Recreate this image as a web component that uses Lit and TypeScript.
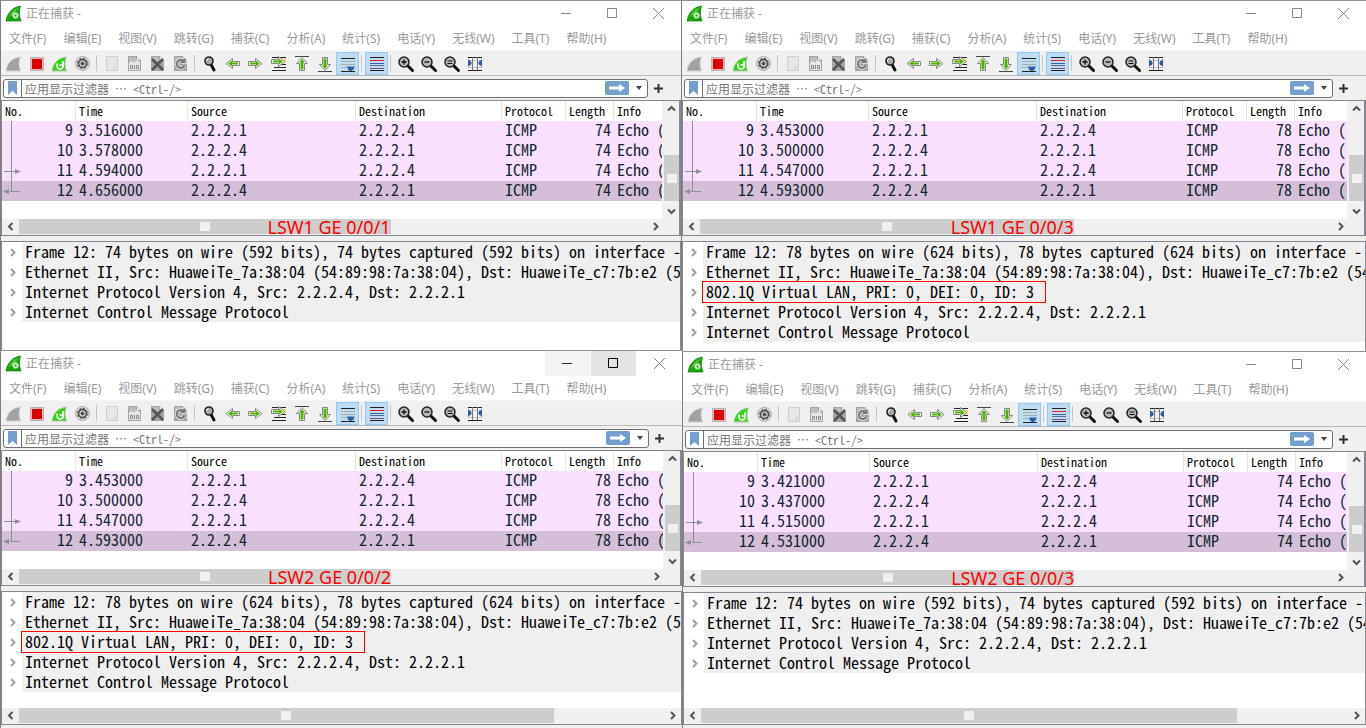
import { LitElement, html, svg, css, nothing, TemplateResult } from "lit";
import { customElement, property } from "lit/decorators.js";
import { classMap } from "lit/directives/class-map.js";
import { styleMap } from "lit/directives/style-map.js";

interface Capture {
  id: string;
  label: string;
  times: string[];
  length: number;
  vlan: boolean;
  hover: boolean;
  detailScroll: boolean;
}

const CAPTURES: Capture[] = [
  { id: "w1", label: "LSW1 GE 0/0/1", times: ["3.516000", "3.578000", "4.594000", "4.656000"], length: 74, vlan: false, hover: false, detailScroll: false },
  { id: "w2", label: "LSW1 GE 0/0/3", times: ["3.453000", "3.500000", "4.547000", "4.593000"], length: 78, vlan: true, hover: false, detailScroll: false },
  { id: "w3", label: "LSW2 GE 0/0/2", times: ["3.453000", "3.500000", "4.547000", "4.593000"], length: 78, vlan: true, hover: true, detailScroll: true },
  { id: "w4", label: "LSW2 GE 0/0/3", times: ["3.421000", "3.437000", "4.515000", "4.531000"], length: 74, vlan: false, hover: false, detailScroll: true },
];

const MENUS = ["文件(F)", "编辑(E)", "视图(V)", "跳转(G)", "捕获(C)", "分析(A)", "统计(S)", "电话(Y)", "无线(W)", "工具(T)", "帮助(H)"];

const arrowRight = svg`<path d="M3.500 8.500h7v-3l6.500 5-6.500 5v-3h-7z" fill="#fff" stroke="#858585"/><path d="M5 9.500h6v-2l4 3-4 3v-2H5z" fill="#4fb400"/>`;
const page = svg`<path d="M4 3h9l4 4v11H4z" fill="#a4a4a4"/><path d="M13 3v4h4z" fill="#e4e4e4"/><path d="M5 4h7v4H5z" fill="#bdbdbd"/>`;
const lens = svg`<path d="M12.500 12.500l5 5" stroke="#111" stroke-width="3" stroke-linecap="round"/><circle cx="9" cy="9" r="5" fill="#b9b9b9" stroke="#222" stroke-width="1.500"/>`;

const ICONS: Record<string, TemplateResult> = {
  start: svg`<path d="M3 18C4 10 9 5 17.500 4c-2 4-2 9 0 14z" fill="#a2a2a2" stroke="#d0d0d0"/>`,
  stop: svg`<path d="M4.500 4.500h13v13h-13z" fill="#e8b8b8" stroke="#b4b4b4"/><path d="M6 6h10v10H6z" fill="#dc0000"/>`,
  restart: svg`<path d="M3 18C4 10 9 5 17.500 4c-2 4-2 9 0 14z" fill="#2fd80c" stroke="#b8c4b4"/><path d="M8.500 10.500c-1.500 3 0 5.500 2.500 5.500 2.500 0 4-2.500 3-4.500M14 8v4h-3.500" fill="none" stroke="#fff" stroke-width="1.700"/>`,
  options: svg`<circle cx="10.500" cy="10.500" r="7" fill="#e2e2e2" stroke="#a8a8a8"/><circle cx="10.500" cy="10.500" r="4" fill="#e2e2e2" stroke="#555" stroke-width="1.800"/><circle cx="10.500" cy="10.500" r="5.200" stroke="#555" stroke-dasharray="2 2.080"/><circle cx="10.500" cy="10.500" r="2" fill="#555"/>`,
  open: svg`<path d="M5.500 3.500h11v14h-11z" fill="#e7e7e7" stroke="#cecece"/><path d="M13 17v-3h3" fill="none" stroke="#cecece"/>`,
  save: svg`${page}<path d="M5 11h11v6H5z" fill="#e6e6e6"/><path d="M6.500 12.500h2v3h-2zM10.500 12v4M12.500 12.500h2v3h-2z" fill="none" stroke="#888"/><path d="M5 9l3-1 2 1 3-2 3 2v2H5z" fill="#e6e6e6"/>`,
  close: svg`${page}<path d="M5 6l11 11M16 6L5 17" stroke="#555" stroke-width="2.500"/>`,
  reload: svg`${page}<path d="M13.500 8A4 4 0 1 0 14.500 12.500M14.500 5.500V9H11" fill="none" stroke="#ddd" stroke-width="4"/><path d="M13.500 8A4 4 0 1 0 14.500 12.500M14.500 5.500V9H11" fill="none" stroke="#777" stroke-width="2"/>`,
  find: svg`<path d="M12 11.500l3 5.500" stroke="#111" stroke-width="3" stroke-linecap="round"/><circle cx="10" cy="8" r="4" fill="#a8a8a8" stroke="#222" stroke-width="1.600"/><path d="M7.500 8a2.500 2.500 0 0 1 2-2.500" stroke="#fff" fill="none"/>`,
  back: svg`<path d="M17.500 8.500h-7v-3l-6.500 5 6.500 5v-3h7z" fill="#fff" stroke="#858585"/><path d="M16 9.500h-6v-2l-4 3 4 3v-2h6z" fill="#4fb400"/>`,
  forward: arrowRight,
  goto: svg`<path d="M4 4.500h14M6 14.500h12M4 17.500h14M13 11.500h5" stroke="#222"/><path d="M14 6h4v4h-4z" fill="#ffe34d"/><g transform="translate(0 -2)">${arrowRight}</g>`,
  first: svg`<path d="M4 3.500h14" stroke="#444"/><path d="M8.500 17.500v-7h-3l5.500-6 5.500 6h-3v7z" fill="#fff" stroke="#858585"/><path d="M9.500 16.500v-7H8L11 6l3 3.500h-1.500v7z" fill="#4fb400"/>`,
  last: svg`<path d="M4 18.500h14" stroke="#444"/><path d="M8.500 4.500v7h-3l5.500 6 5.500-6h-3v-7z" fill="#fff" stroke="#858585"/><path d="M9.500 5.500v7H8l3 3.500 3-3.500h-1.500v-7z" fill="#4fb400"/>`,
  auto: svg`<path d="M4 5.500h14M4 18.500h14" stroke="#222"/><path d="M4 8.500h14M4 11.500h14M4 14.500h14" stroke="#a9b0a8"/><path d="M10 13.500h7.500l-1 3-2 1.500h-1.500l-2-1.500z" fill="#2e5fa5"/>`,
  colors: svg`<path d="M4 4.500h14M4 17.500h14" stroke="#222"/><path d="M4 7.500h14" stroke="#ee1c1c"/><path d="M4 10.500h14" stroke="#3465a4"/><path d="M4 12.500h14" stroke="#4e6d92"/><path d="M4 15.500h14" stroke="#75507b"/>`,
  zoomIn: svg`${lens}<path d="M6.500 9h5M9 6.500v5" stroke="#111" stroke-width="1.300"/>`,
  zoomOut: svg`${lens}<path d="M6.500 9h5" stroke="#111" stroke-width="1.300"/>`,
  zoomReset: svg`${lens}<path d="M6.500 8h5M6.500 10.500h5" stroke="#111"/>`,
  resize: svg`<path d="M4 4.500h14M4 17.500h14" stroke="#222"/><path d="M4 7.500h14M4 14.500h14" stroke="#c4c4c4"/><path d="M8.500 4v13M13.500 4v13" stroke="#777"/><path d="M4 6l4 4-4 4zM18 6l-4 4 4 4z" fill="#2e5fa5"/><path d="M4 8h3v4H4zM15 8h3v4h-3z" fill="#2e5fa5"/>`,
};

const TOOLS: [string, string][][] = [
  [["start", "Start"], ["stop", "Stop"], ["restart", "Restart"], ["options", "Options"]],
  [["open", "Open"], ["save", "Save"], ["close", "Close"], ["reload", "Reload"]],
  [["find", "Find"], ["back", "Back"], ["forward", "Forward"], ["goto", "Go to"], ["first", "First"], ["last", "Last"], ["auto", "Auto scroll"]],
  [["colors", "Colorize"]],
  [["zoomIn", "Zoom in"], ["zoomOut", "Zoom out"], ["zoomReset", "Normal size"], ["resize", "Resize columns"]],
];

const chevron = (d: string) => html`<svg class="chev" width="15" height="15" viewBox="0 0 15 15" aria-hidden="true"><path d=${d} /></svg>`;
const UP = "M4 9.500l3.500-3.500 3.500 3.500";
const DOWN = "M4 5.500l3.500 3.500 3.500-3.500";
const LEFT = "M9.500 4L6 7.500l3.500 3.500";
const RIGHT = "M6 4l3.500 3.500L6 11";

@customElement("capture-window")
export class CaptureWindow extends LitElement {
  @property({ attribute: false }) data!: Capture;

  static styles = css`
    :host {
      display: flex;
      flex-direction: column;
      min-width: 0;
      min-height: 0;
      overflow: hidden;
      box-sizing: border-box;
      border-top: 1px solid #929290;
      border-left: 1px solid #7d7d7d;
      background: #f0f0f0;
      color: #000;
      font: 12px/16px "Noto Sans", "Noto Sans CJK SC", sans-serif;
    }
    button { border: 0; padding: 0; margin: 0; background: none; font: inherit; color: inherit; display: grid; place-items: center; }
    svg { display: block; fill: none; }
    .title { display: flex; align-items: center; height: 25px; padding-left: 4px; background: #fff; color: #999; }
    .title h2 { flex: 1; margin: 0; padding-left: 4px; font: inherit; }
    .sys { width: 45px; height: 25px; stroke: #888; }
    .min, .max { margin-right: 1px; }
    .hover .min { background: #f4f4f4; stroke: #333; }
    .hover .max { background: #e3e3e3; stroke: #000; }
    .menu { display: flex; gap: 17px; height: 22px; padding: 2px 0 0 8px; background: #fff; color: #999; align-items: center; white-space: nowrap; }
    .tools { display: flex; align-items: center; height: 25px; padding-left: 1px; border-top: 1px solid #f6f6f6; border-bottom: 1px solid #b8b8b8; box-sizing: border-box; height: 26px; }
    .tool { width: 23px; height: 23px; }
    .on { background: #c0dcf3; box-shadow: inset 0 0 0 1px #90c8f6; }
    .sep { width: 1px; height: 16px; margin-right: 3px; margin-left: 2px; background: #c6c6c6; }
    .filter { display: flex; align-items: center; height: 24px; padding-left: 2px; }
    .field { display: flex; flex: 1; align-items: center; height: 19px; box-sizing: border-box; border: 1px solid #6e6e74; border-radius: 3px; background: #fff; overflow: hidden; }
    .mark { width: 18px; height: 17px; border-right: 1px solid #6e6e74; }
    input { flex: 1; min-width: 0; height: 17px; padding: 0 3px; border: 0; outline: 0; background: none; font: 12px/16px "Noto Sans Mono CJK SC", "Noto Sans CJK SC", monospace; }
    input::placeholder { color: #777; opacity: 1; }
    .apply { width: 24px; height: 14px; margin-right: 2px; border-radius: 2px; background: #729fcf; }
    .drop { width: 16px; height: 17px; }
    .plus { width: 20px; height: 19px; margin-right: 13px; }
    .packets { display: grid; grid-template-columns: minmax(0, 1fr) 15px; border: 1px solid #828790; border-right-width: 2px; margin-bottom: 5px; }
    .rows { position: relative; height: 118px; margin-right: 2px; overflow: hidden; background: #fff; }
    table { width: 100%; table-layout: fixed; border-collapse: separate; border-spacing: 0; }
    th, td { padding: 0 3px; white-space: pre; box-sizing: border-box; height: 20px; text-align: left; vertical-align: top; }
    th { font: 12px/20px "Noto Sans Mono CJK SC", "Liberation Mono", monospace; border-right: 1px solid #e4e4e4; }
    th:last-child { border-right: 0; }
    td { font: 16px/16px "Noto Sans Mono CJK SC", "Liberation Mono", monospace; color: #12272e; background: #fae0ff; }
    .sel td { background: #d5bfd8; }
    td.num { text-align: right; }
    .c1 { width: 74px; }
    .c2 { width: 112px; }
    .c3 { width: 168px; }
    .c4 { width: 146px; }
    .c5 { width: 64px; }
    .c6 { width: 48px; }
    .flow { position: absolute; left: 0; top: 20px; stroke: #8a9296; }
    .vbar { display: flex; flex-direction: column; background: #f0f0f0; height: 118px; }
    .vthumb { display: grid; place-items: center; height: 46px; margin-top: 39px; margin-bottom: auto; background: #cdcdcd; }
    .chev { flex: none; stroke: #555; stroke-width: 2; }
    .hbar { display: flex; align-items: center; height: 15px; background: #f0f0f0; padding: 0 1px 1px; }
    .packets .hbar { grid-column: 1; }
    .hthumb { position: relative; display: grid; place-items: center; height: 15px; margin-left: 1px; margin-right: auto; background: #cdcdcd; }
    .grip { width: 10px; height: 9px; background: #f0f0f0; }
    .tag { position: absolute; right: 0; top: -2px; color: #f00; font: 18px/20px "Noto Sans", sans-serif; white-space: nowrap; }
    .details { display: flex; flex: 1; min-height: 0; flex-direction: column; border: 1px solid #828790; border-bottom: 0; background: #fff; overflow: hidden; }
    .scrolling { border-bottom: 1px solid #828790; margin-bottom: 3px; }
    .tree { flex: 1; min-height: 0; margin: 0; padding: 0; list-style: none; font: 16px/18px "Noto Sans Mono CJK SC", "Liberation Mono", monospace; overflow: hidden; }
    .tree li { display: flex; height: 20px; white-space: pre; }
    .tree .open { width: 20px; height: 20px; flex: none; }
    .tree .open path { stroke: #a0a0a0; }
    .line { flex: 1; background: #efefef; }
    .text { display: block; width: max-content; height: 20px; padding-left: 3px; }
    .boxed { padding-right: 11px; outline: 1px solid #f00; position: relative; }
  `;

  render() {
    const d = this.data;
    const n = d.length;
    const lines = [
      `Frame 12: ${n} bytes on wire (${n * 8} bits), ${n} bytes captured (${n * 8} bits) on interface -`,
      "Ethernet II, Src: HuaweiTe_7a:38:04 (54:89:98:7a:38:04), Dst: HuaweiTe_c7:7b:e2 (54",
      ...(d.vlan ? ["802.1Q Virtual LAN, PRI: 0, DEI: 0, ID: 3"] : []),
      "Internet Protocol Version 4, Src: 2.2.2.4, Dst: 2.2.2.1",
      "Internet Control Message Protocol",
    ];
    return html`
      <header class=${classMap({ title: true, hover: d.hover })}>
        <svg width="17" height="17" viewBox="0 0 17 17" aria-hidden="true"><path d="M1 16C2 9 7 2 15.500 1c-1.500 5-1.500 10 .5 15z" fill="#17a50c" stroke="#0b7d08" stroke-width=".7"/><path d="M4 12C6 7 9 4 14 2.500 10 7 11 8 4 12z" fill="#55c83a"/><circle cx="10.500" cy="10.500" r="2.700" fill="#b9e8b1" stroke="#fff" stroke-dasharray="1 .6"/><circle cx="10.500" cy="10.500" r="1" fill="#2b9a20"/></svg>
        <h2>正在捕获 -</h2>
        <button class="sys min" aria-label="Minimize"><svg width="11" height="11"><path d="M0 5.500h10"/></svg></button>
        <button class="sys max" aria-label="Maximize"><svg width="11" height="11"><path d="M.5.5h9v9h-9z"/></svg></button>
        <button class="sys close" aria-label="Close"><svg width="11" height="11"><path d="M0 0l11 11M11 0L0 11"/></svg></button>
      </header>
      <nav class="menu">${MENUS.map((m) => html`<button>${m}</button>`)}</nav>
      <div class="tools">
        ${TOOLS.map((g, i) => html`${i ? html`<span class="sep"></span>` : nothing}${g.map(([k, name]) => html`
          <button class=${classMap({ tool: true, on: k === "auto" || k === "colors" })} aria-label=${name}>
            <svg width="21" height="21" viewBox="0 0 21 21">${ICONS[k]}</svg>
          </button>`)}`)}
      </div>
      <div class="filter">
        <div class="field">
          <button class="mark" aria-label="Bookmarks"><svg width="9" height="14"><path d="M0 0h9v14L4.500 10 0 14z" fill="#729fcf"/></svg></button>
          <input aria-label="应用显示过滤器" placeholder="应用显示过滤器 ⋯ &lt;Ctrl-/&gt;" />
          <button class="apply" aria-label="Apply"><svg width="18" height="10"><path d="M1 3.500h10V1l6 4-6 4V6.500H1z" fill="#fff"/></svg></button>
          <button class="drop" aria-label="Recent"><svg width="8" height="5"><path d="M1 0h6L4 4z" fill="#444"/></svg></button>
        </div>
        <button class="plus" aria-label="Add"><svg width="9" height="9"><path d="M0 4.500h9M4.500 0v9" stroke="#333" stroke-width="2"/></svg></button>
      </div>
      <section class="packets">
        <div class="rows">
          <table>
            <thead><tr>${["No.", "Time", "Source", "Destination", "Protocol", "Length", "Info"].map((h, i) => html`<th class="c${i + 1}">${h}</th>`)}</tr></thead>
            <tbody>
              ${d.times.map((t, i) => html`<tr class=${classMap({ sel: i === 3 })}>
                <td class="num">${i + 9}</td><td>${t}</td><td>${i % 2 ? "2.2.2.4" : "2.2.2.1"}</td><td>${i % 2 ? "2.2.2.1" : "2.2.2.4"}</td><td>ICMP</td><td class="num">${n}</td><td>Echo (</td>
              </tr>`)}
            </tbody>
          </table>
          <svg class="flow" width="22" height="80"><path d="M9.500 0v70M2 50.500h12M8 70.500h10"/><path d="M13 48l6 2.500-6 2.500zM7 68l-6 2.500L7 73z" fill="#8a9296" stroke="none"/></svg>
        </div>
        <div class="vbar">${chevron(UP)}<div class="vthumb"><i class="grip"></i></div>${chevron(DOWN)}</div>
        <div class="hbar">${chevron(LEFT)}
          <div class="hthumb" style=${styleMap({ width: "56.300%" })}><i class="grip"></i><span class="tag">${d.label}</span></div>
        ${chevron(RIGHT)}</div>
      </section>
      <section class=${classMap({ details: true, scrolling: d.detailScroll })}>
        <ul class="tree">
          ${lines.map((l) => html`<li><button class="open" aria-label="Expand">${chevron(RIGHT)}</button><div class="line"><span class=${classMap({ text: true, boxed: l.startsWith("802") })}>${l}</span></div></li>`)}
        </ul>
        ${d.detailScroll ? html`<div class="hbar">${chevron(LEFT)}<div class="hthumb" style=${styleMap({ width: "79%" })}><i class="grip"></i></div>${chevron(RIGHT)}</div>` : nothing}
      </section>
    `;
  }
}

@customElement("app-root")
export class AppRoot extends LitElement {
  static styles = css`
    :host {
      display: grid;
      height: 100vh;
      grid-template-columns: minmax(0, 681fr) 1px minmax(0, 684fr);
      grid-template-rows: minmax(0, 350fr) 1px minmax(0, 377fr);
      background: #f0f0f0;
    }
    .w1 { grid-area: 1 / 1 / 2 / 2; }
    .w2 { grid-area: 1 / 2 / 3 / 4; }
    .w3 { grid-area: 2 / 1 / 4 / 3; }
    .w4 { grid-area: 3 / 3 / 4 / 4; }
  `;

  render() {
    return CAPTURES.map((c) => html`<capture-window class=${c.id} .data=${c}></capture-window>`);
  }
}
